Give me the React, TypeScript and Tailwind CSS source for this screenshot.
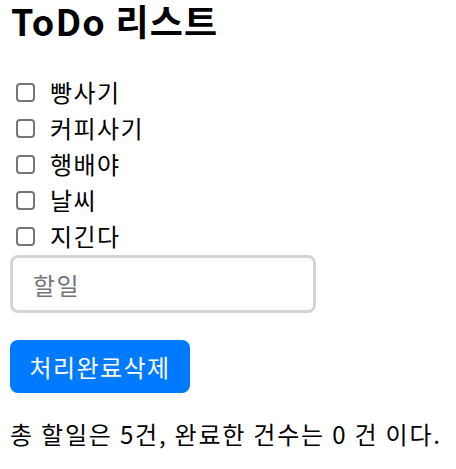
export default function App() {
  const todos = ['빵사기', '커피사기', '행배야', '날씨', '지긴다'];
  const done = 0;

  return (
    <div className="px-[10px] pt-0 text-black font-['Noto_Sans_CJK_KR','Noto_Sans',sans-serif]">
      {/* Title */}
      <h1 className="text-[36px] font-bold leading-[48px] -mt-[4px] tracking-[1.2px] ml-[1px]">ToDo 리스트</h1>

      {/* Todo list */}
      <ul className="mt-[30px] pl-[6px]">
        {todos.map((todo) => (
          <li key={todo} className="flex items-center h-[36px] text-[24px] tracking-[1.4px]">
            <input
              type="checkbox"
              className="appearance-none w-[19px] h-[19px] border-2 border-[#767676] rounded-[4px] bg-white mr-[15px]"
            />
            <span>{todo}</span>
          </li>
        ))}
      </ul>

      {/* Input */}
      <input
        type="text"
        placeholder="할일"
        className="block w-[306px] h-[58px] mt-[1px] border-[3px] border-[#d1d5db] rounded-[8px] px-[20px] text-[24px] tracking-[1.4px] placeholder:text-[#757575] outline-none"
      />

      {/* Button */}
      <button className="mt-[27px] h-[53px] w-[180px] bg-[#007bff] text-white text-[24px] tracking-[1.4px] rounded-[8px]">
        처리완료삭제
      </button>

      {/* Summary */}
      <p className="mt-[23px] text-[24px] leading-[36px] tracking-[1.8px]">
        총 할일은 {todos.length}건, 완료한 건수는 {done} 건 이다.
      </p>
    </div>
  );
}
